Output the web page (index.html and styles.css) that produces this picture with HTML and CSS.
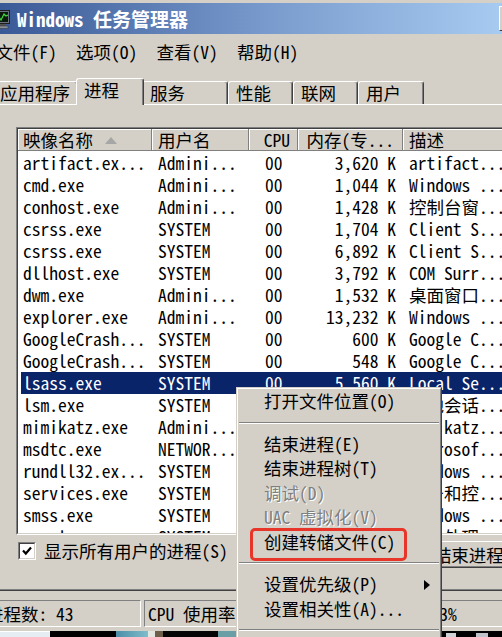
FILE: index.html
```html
<!DOCTYPE html>
<html lang="zh-CN">
<head>
<meta charset="utf-8">
<title>Windows 任务管理器</title>
<link rel="stylesheet" href="styles.css">
</head>
<body>
<div class="screen">
  <div class="titlebar">
    <svg class="appicon" width="16" height="19" viewBox="0 0 16 19">
      <rect x="0.5" y="0.5" width="15" height="13" fill="#6b7280" stroke="#1e1e1e"/>
      <rect x="2" y="2" width="12" height="10" fill="#0c1a0c"/>
      <polyline points="2,9 5,7 7,10 10,4 12,6 14,5" fill="none" stroke="#3fdc3f" stroke-width="1.2"/>
      <rect x="5" y="14" width="6" height="2" fill="#555"/>
      <rect x="2" y="16" width="12" height="2.5" fill="#8a8f99" stroke="#333" stroke-width="0.5"/>
    </svg>
    <span class="title">Windows <span class="zh">任务管理器</span></span>
    <span class="capbtn"></span>
  </div>

  <div class="menubar">
    <span class="menuitem"><span class="zh">文件</span>(F)</span>
    <span class="menuitem"><span class="zh">选项</span>(O)</span>
    <span class="menuitem"><span class="zh">查看</span>(V)</span>
    <span class="menuitem"><span class="zh">帮助</span>(H)</span>
  </div>

  <div class="tabs">
    <div class="tab w-app"><span class="zh">应用程序</span></div>
    <div class="tab tab-sel"><span class="zh">进程</span></div>
    <div class="tab w-svc"><span class="zh">服务</span></div>
    <div class="tab w-perf"><span class="zh">性能</span></div>
    <div class="tab w-net"><span class="zh">联网</span></div>
    <div class="tab w-user"><span class="zh">用户</span></div>
  </div>

  <div class="pane">
    <div class="list">
      <div class="list-in">
        <div class="lhead">
          <div class="hc h1"><span class="zh">映像名称</span><svg class="sortarrow" width="12" height="7" viewBox="0 0 12 7"><polygon points="0,7 6,0 12,7" fill="#a6a6a6"/></svg></div>
          <div class="hc h2"><span class="zh">用户名</span></div>
          <div class="hc h3">CPU</div>
          <div class="hc h4"><span class="zh">内存</span>(<span class="zh">专</span>...</div>
          <div class="hc h5"><span class="zh">描述</span></div>
        </div>
        <div class="lbody">
          <div class="row"><span class="c c1">artifact.ex...</span><span class="c c2">Admini...</span><span class="c c3">00</span><span class="c c4">3,620 K</span><span class="c c5">artifact...</span></div>
          <div class="row"><span class="c c1">cmd.exe</span><span class="c c2">Admini...</span><span class="c c3">00</span><span class="c c4">1,044 K</span><span class="c c5">Windows ...</span></div>
          <div class="row"><span class="c c1">conhost.exe</span><span class="c c2">Admini...</span><span class="c c3">00</span><span class="c c4">1,428 K</span><span class="c c5"><span class="zh">控制台窗</span>...</span></div>
          <div class="row"><span class="c c1">csrss.exe</span><span class="c c2">SYSTEM</span><span class="c c3">00</span><span class="c c4">1,704 K</span><span class="c c5">Client S...</span></div>
          <div class="row"><span class="c c1">csrss.exe</span><span class="c c2">SYSTEM</span><span class="c c3">00</span><span class="c c4">6,892 K</span><span class="c c5">Client S...</span></div>
          <div class="row"><span class="c c1">dllhost.exe</span><span class="c c2">SYSTEM</span><span class="c c3">00</span><span class="c c4">3,792 K</span><span class="c c5">COM Surr...</span></div>
          <div class="row"><span class="c c1">dwm.exe</span><span class="c c2">Admini...</span><span class="c c3">00</span><span class="c c4">1,532 K</span><span class="c c5"><span class="zh">桌面窗口</span>...</span></div>
          <div class="row"><span class="c c1">explorer.exe</span><span class="c c2">Admini...</span><span class="c c3">00</span><span class="c c4">13,232 K</span><span class="c c5">Windows ...</span></div>
          <div class="row"><span class="c c1">GoogleCrash...</span><span class="c c2">SYSTEM</span><span class="c c3">00</span><span class="c c4">600 K</span><span class="c c5">Google C...</span></div>
          <div class="row"><span class="c c1">GoogleCrash...</span><span class="c c2">SYSTEM</span><span class="c c3">00</span><span class="c c4">548 K</span><span class="c c5">Google C...</span></div>
          <div class="row sel"><span class="c c1">lsass.exe</span><span class="c c2">SYSTEM</span><span class="c c3">00</span><span class="c c4">5,560 K</span><span class="c c5">Local Se...</span></div>
          <div class="row"><span class="c c1">lsm.exe</span><span class="c c2">SYSTEM</span><span class="c c3">00</span><span class="c c4">1,180 K</span><span class="c c5"><span class="zh">本地会话</span>...</span></div>
          <div class="row"><span class="c c1">mimikatz.exe</span><span class="c c2">Admini...</span><span class="c c3">00</span><span class="c c4">2,116 K</span><span class="c c5">mimikatz...</span></div>
          <div class="row"><span class="c c1">msdtc.exe</span><span class="c c2">NETWOR...</span><span class="c c3">00</span><span class="c c4">1,864 K</span><span class="c c5">Microsof...</span></div>
          <div class="row"><span class="c c1">rundll32.ex...</span><span class="c c2">SYSTEM</span><span class="c c3">00</span><span class="c c4">2,368 K</span><span class="c c5">Windows ...</span></div>
          <div class="row"><span class="c c1">services.exe</span><span class="c c2">SYSTEM</span><span class="c c3">00</span><span class="c c4">3,460 K</span><span class="c c5"><span class="zh">服务和控</span>...</span></div>
          <div class="row"><span class="c c1">smss.exe</span><span class="c c2">SYSTEM</span><span class="c c3">00</span><span class="c c4">240 K</span><span class="c c5">Windows ...</span></div>
          <div class="row"><span class="c c1">spoolsv.exe</span><span class="c c2">SYSTEM</span><span class="c c3">00</span><span class="c c4">4,172 K</span><span class="c c5"><span class="zh">后台处理</span>...</span></div>
        </div>
      </div>
    </div>

    <div class="below">
      <div class="chk">
        <span class="chkbox"><span class="chkin"><svg width="12" height="12" viewBox="0 0 12 12"><path d="M2 5.5 L4.8 8.5 L10 2.5" fill="none" stroke="#000" stroke-width="2.2"/></svg></span></span>
        <span class="chklabel"><span class="zh">显示所有用户的进程</span>(S)</span>
      </div>
      <div class="btn"><span class="zh">结束进程</span>(E)</div>
    </div>
  </div>

  <div class="status">
    <div class="sp sp1"><span class="zh">进程数</span>: 43</div>
    <div class="sp sp2">CPU <span class="zh">使用率</span>: 3%</div>
    <div class="sp sp3"><span class="zh">物理内存</span>: 33%</div>
  </div>

  <div class="strip">
    <span class="sb b1"></span><span class="sb b2"></span><span class="sb b3"></span><span class="sb b4"></span><span class="sb b5"></span><span class="sb b6"></span><span class="sb b7"></span><span class="sb b8"></span><span class="sb b9"></span><span class="sb b10"></span><span class="sb b11"></span>
  </div>

  <div class="ctx">
    <div class="ctx-in">
      <div class="ci"><span class="zh">打开文件位置</span>(O)</div>
      <div class="csep"></div>
      <div class="ci"><span class="zh">结束进程</span>(E)</div>
      <div class="ci"><span class="zh">结束进程树</span>(T)</div>
      <div class="ci dis"><span class="zh">调试</span>(D)</div>
      <div class="ci dis">UAC <span class="zh">虚拟化</span>(V)</div>
      <div class="ci"><span class="zh">创建转储文件</span>(C)</div>
      <div class="csep"></div>
      <div class="ci"><span class="zh">设置优先级</span>(P)<svg class="subarrow" width="6" height="10" viewBox="0 0 6 10"><polygon points="0,0 6,5 0,10" fill="#000"/></svg></div>
      <div class="ci"><span class="zh">设置相关性</span>(A)...</div>
      <div class="csep"></div>
      <div class="ci"><span class="zh">属性</span>(R)</div>
      <div class="ci"><span class="zh">转到服务</span>(S)</div>
    </div>
    <div class="redmark"></div>
  </div>
</div>
</body>
</html>
```

FILE: styles.css
```css
:root {
  --lat: "Noto Sans Mono CJK SC", "DejaVu Sans Mono", monospace;
  --zhf: "Noto Sans Mono CJK SC", "Noto Sans CJK SC", sans-serif;
  --zr: 1;
  --fs: calc(17.5px / var(--zr));
  --face: #d4d0c8;
}

html, body {
  margin: 0;
  padding: 0;
}

body {
  background: var(--face);
  font-family: var(--lat);
  font-size: var(--fs);
  color: #000;
}

.screen {
  position: relative;
  width: 502px;
  height: 637px;
  overflow: hidden;
  background: var(--face);
}

.zh {
  font-family: var(--zhf);
  font-size: calc(var(--zr) * 1em);
}

/* ---------- title bar ---------- */
.titlebar {
  margin-top: 3px;
  height: 31px;
  width: 520px;
  display: flex;
  align-items: center;
  background: linear-gradient(to right, #3a5997 0%, #7d9fd0 55%, #a6caf0 96%);
}

.appicon {
  flex: none;
  margin-left: -6px;
  margin-top: 1px;
}

.title {
  margin-left: 7px;
  font-size: calc(19px / var(--zr));
  font-weight: bold;
  color: #fff;
  line-height: 31px;
  white-space: pre;
}

.capbtn {
  margin-left: auto;
  width: 21px;
  height: 25px;
  box-sizing: border-box;
  background: var(--face);
  border: 1px solid;
  border-color: #fff #404040 #404040 #fff;
}

/* ---------- menu bar ---------- */
.menubar {
  display: flex;
  gap: 19.25px;
  height: 36px;
  line-height: 36px;
  margin-left: -4.5px;
  white-space: nowrap;
}

/* ---------- tabs ---------- */
.tabs {
  display: flex;
  align-items: flex-end;
  height: 26px;
  margin-top: 8px;
  margin-left: -8px;
}

.tab {
  flex: none;
  box-sizing: border-box;
  height: 23px;
  padding-left: 7px;
  line-height: 21px;
  background: var(--face);
  border: 1px solid #fff;
  border-bottom: 0;
  border-right-color: #404040;
  box-shadow: inset -1px 0 0 #808080;
  border-radius: 3px 3px 0 0;
  white-space: nowrap;
}

.w-app { width: 86px; }
.w-svc { width: 86px; }
.w-perf { width: 65px; }
.w-net { width: 65px; }
.w-user { width: 66px; }

.tab-sel {
  position: relative;
  z-index: 1;
  width: 68px;
  height: 27px;
  margin: 0 -2px -1px;
}

/* ---------- pane ---------- */
.pane {
  box-sizing: border-box;
  width: 560px;
  height: 487px;
  border-top: 1px solid #fff;
  border-bottom: 1px solid #404040;
  box-shadow: inset 0 -1px 0 #808080;
  padding: 22px 0 0 16px;
}

.list {
  box-sizing: border-box;
  width: 504px;
  height: 408px;
  border: 1px solid;
  border-color: #808080 #fff #fff #808080;
}

.list-in {
  box-sizing: border-box;
  height: 100%;
  border: 1px solid;
  border-color: #404040 var(--face) var(--face) #404040;
  background: #fff;
  overflow: hidden;
}

.lhead {
  display: flex;
  height: 22px;
  background: var(--face);
  line-height: 21px;
  white-space: nowrap;
}

.hc {
  flex: none;
  box-sizing: border-box;
  height: 22px;
  border-right: 1px solid #808080;
  border-bottom: 1px solid #808080;
  box-shadow: inset 1px 1px 0 #fff;
  overflow: hidden;
}

.h1 { width: 134px; padding-left: 5px; display: flex; align-items: center; }
.h2 { width: 97px; padding-left: 6px; }
.h3 { width: 49px; padding-right: 7px; text-align: right; }
.h4 { width: 105px; padding-right: 8px; text-align: right; }
.h5 { width: 200px; padding-left: 6px; }

.sortarrow {
  margin-left: 12px;
  margin-top: 1px;
}

.lbody {
  padding-top: 1px;
}

.row {
  display: flex;
  height: 22px;
  line-height: 22px;
  margin-left: 3px;
  white-space: pre;
}

.row.sel {
  background: #0a246a;
  color: #fff;
}

.c {
  flex: none;
  box-sizing: border-box;
  overflow: hidden;
}

.c1 { width: 131px; padding-left: 2px; }
.c2 { width: 97px; padding-left: 6px; }
.c3 { width: 49px; padding-left: 16px; }
.c4 { width: 105px; padding-right: 7px; text-align: right; }
.c5 { flex: 1; padding-left: 6px; }

/* ---------- below list ---------- */
.below {
  display: flex;
  align-items: flex-start;
  width: 528px;
  height: 27px;
  margin-top: 6px;
}

.chk {
  display: flex;
  align-items: flex-start;
}

.chkbox {
  box-sizing: border-box;
  width: 18px;
  height: 18px;
  margin: 1px 0 0 2px;
  border: 1px solid;
  border-color: #808080 #fff #fff #808080;
}

.chkin {
  box-sizing: border-box;
  display: flex;
  align-items: center;
  justify-content: center;
  width: 100%;
  height: 100%;
  border: 1px solid;
  border-color: #404040 var(--face) var(--face) #404040;
  background: #fff;
}

.chklabel {
  margin-left: 8px;
  line-height: 20px;
  white-space: nowrap;
}

.btn {
  margin-left: auto;
  box-sizing: border-box;
  width: 124px;
  height: 27px;
  border: 1px solid;
  border-color: #fff #404040 #404040 #fff;
  box-shadow: inset -1px -1px 0 #808080;
  text-align: center;
  line-height: 25px;
  white-space: nowrap;
}

/* ---------- status bar ---------- */
.status {
  display: flex;
  gap: 3px;
  margin-top: 9px;
  margin-left: -18px;
  height: 27px;
}

.sp {
  flex: none;
  box-sizing: border-box;
  height: 27px;
  line-height: 25px;
  padding-left: 3px;
  border: 1px solid;
  border-color: #808080 #fff #fff #808080;
  white-space: pre;
}

.sp1 { width: 159px; }
.sp2 { width: 192px; }
.sp3 { width: 220px; }

/* ---------- bottom strip ---------- */
.strip {
  display: flex;
  margin-top: 4px;
  height: 10px;
  background: #000;
}

.sb { flex: none; height: 100%; }
.b1 { width: 50px; background: #e6edf3; box-shadow: inset 0 1px 0 #fff; }
.b2 { width: 66px; background: #000; }
.b3 { width: 32px; background: linear-gradient(to right, #4d8fa8, #7fbccb); }
.b4 { width: 7px; background: #e4e6e0; }
.b5 { width: 8px; background: #6e5f48; }
.b6 { width: 55px; background: #050505; }
.b7 { width: 18px; background: #6a9fa5; }
.b8 { width: 210px; background: #000; }
.b9 { width: 10px; background: #cfd3d8; margin-top: 2px; height: 8px; }
.b10 { width: 20px; background: #000; }
.b11 { width: 12px; background: #bfc4ca; margin-top: 2px; height: 8px; }

/* ---------- context menu ---------- */
.ctx {
  position: absolute;
  left: 236px;
  top: 387px;
  width: 206px;
  box-sizing: border-box;
  border: 1px solid;
  border-color: var(--face) #404040 #404040 var(--face);
  background: var(--face);
  z-index: 5;
}

.ctx-in {
  border: 1px solid;
  border-color: #fff #808080 #808080 #fff;
}

.ci {
  position: relative;
  height: 24.5px;
  line-height: 24.5px;
  padding-left: 26px;
  white-space: pre;
}

.ci.dis {
  color: #808080;
  text-shadow: 1px 1px 0 #fff;
}

.subarrow {
  position: absolute;
  right: 10px;
  top: 8px;
}

.csep {
  height: 18px;
  display: flex;
  align-items: center;
  padding: 0 1px;
}

.csep::before {
  content: "";
  flex: 1;
  border-top: 1px solid #808080;
  border-bottom: 1px solid #fff;
}

.redmark {
  position: absolute;
  left: 13px;
  top: 140px;
  width: 157px;
  height: 33px;
  box-sizing: border-box;
  border: 3px solid #e8352a;
  border-radius: 5px;
}
```
